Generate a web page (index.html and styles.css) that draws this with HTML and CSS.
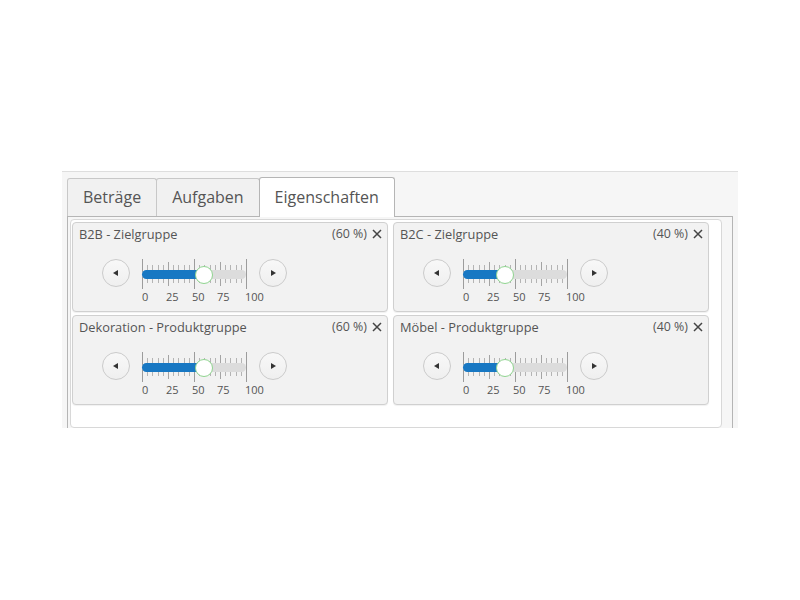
FILE: index.html
```html
<!DOCTYPE html>
<html lang="de">
<head>
  <meta charset="UTF-8" />
  <title>Eigenschaften</title>
  <link rel="stylesheet" href="styles.css">
</head>
<body>
  <div class="widget">
    <!-- Tabs -->
    <div class="tabs">
      <div class="tab">Beträge</div>
      <div class="tab">Aufgaben</div>
      <div class="tab active">Eigenschaften</div>
    </div>

    <div class="tab-content">
      <div class="box">
        <div class="panel">
          <div class="panel-head">
            <span class="title">B2B - Zielgruppe</span>
            <span class="pct">(60 %)</span>
            <svg class="close" width="10" height="10" viewBox="0 0 10 10"><path d="M1 1L9 9M9 1L1 9" /></svg>
          </div>
          <div class="slider-row">
            <div class="step prev"><span class="arrow"></span></div>
            <div class="slider">
              <div class="scale">
                <div class="track">
                  <div class="fill" style="width: 60%"></div>
                  <div class="handle" style="left: 60%"></div>
                </div>
              </div>
              <div class="labels"><span>0</span><span>25</span><span>50</span><span>75</span><span>100</span></div>
            </div>
            <div class="step next"><span class="arrow"></span></div>
          </div>
        </div>

        <div class="panel">
          <div class="panel-head">
            <span class="title">B2C - Zielgruppe</span>
            <span class="pct">(40 %)</span>
            <svg class="close" width="10" height="10" viewBox="0 0 10 10"><path d="M1 1L9 9M9 1L1 9" /></svg>
          </div>
          <div class="slider-row">
            <div class="step prev"><span class="arrow"></span></div>
            <div class="slider">
              <div class="scale">
                <div class="track">
                  <div class="fill" style="width: 40%"></div>
                  <div class="handle" style="left: 40%"></div>
                </div>
              </div>
              <div class="labels"><span>0</span><span>25</span><span>50</span><span>75</span><span>100</span></div>
            </div>
            <div class="step next"><span class="arrow"></span></div>
          </div>
        </div>

        <div class="panel">
          <div class="panel-head">
            <span class="title">Dekoration - Produktgruppe</span>
            <span class="pct">(60 %)</span>
            <svg class="close" width="10" height="10" viewBox="0 0 10 10"><path d="M1 1L9 9M9 1L1 9" /></svg>
          </div>
          <div class="slider-row">
            <div class="step prev"><span class="arrow"></span></div>
            <div class="slider">
              <div class="scale">
                <div class="track">
                  <div class="fill" style="width: 60%"></div>
                  <div class="handle" style="left: 60%"></div>
                </div>
              </div>
              <div class="labels"><span>0</span><span>25</span><span>50</span><span>75</span><span>100</span></div>
            </div>
            <div class="step next"><span class="arrow"></span></div>
          </div>
        </div>

        <div class="panel">
          <div class="panel-head">
            <span class="title">Möbel - Produktgruppe</span>
            <span class="pct">(40 %)</span>
            <svg class="close" width="10" height="10" viewBox="0 0 10 10"><path d="M1 1L9 9M9 1L1 9" /></svg>
          </div>
          <div class="slider-row">
            <div class="step prev"><span class="arrow"></span></div>
            <div class="slider">
              <div class="scale">
                <div class="track">
                  <div class="fill" style="width: 40%"></div>
                  <div class="handle" style="left: 40%"></div>
                </div>
              </div>
              <div class="labels"><span>0</span><span>25</span><span>50</span><span>75</span><span>100</span></div>
            </div>
            <div class="step next"><span class="arrow"></span></div>
          </div>
        </div>
      </div>
    </div>
  </div>
</body>
</html>
```

FILE: styles.css
```css
body {
  margin: 0;
  background: #fff;
  font-family: "Open Sans", "DejaVu Sans", sans-serif;
  color: #555;
}
.widget {
  margin: 171px 0 0 62px;
  width: 676px;
  height: 257px;
  box-sizing: border-box;
  overflow: hidden;
  background: #f6f6f6;
  border-top: 1px solid #dedede;
  padding: 6px 5px 0 5px;
}
.tabs {
  display: flex;
  height: 38px;
}
.tab {
  height: 38px;
  box-sizing: border-box;
  padding: 0 15px;
  margin-right: -1px;
  border: 1px solid #c8c8c8;
  border-bottom: none;
  border-radius: 3px 3px 0 0;
  background: #f1f1f1;
  font-size: 16px;
  line-height: 37px;
  color: #555;
}
.tab.active {
  position: relative;
  z-index: 1;
  margin-top: -1px;
  height: 40px;
  padding-top: 1px;
  background: #fff;
  border-color: #b5b5b5;
}
.tab-content {
  height: 260px;
  box-sizing: border-box;
  border: 1px solid #b5b5b5;
  padding: 2px 10px 0 2px;
}
.box {
  height: 209px;
  box-sizing: border-box;
  background: #fff;
  border: 1px solid #d8d8d8;
  border-radius: 4px;
  padding: 2px 0 0 1px;
  display: grid;
  grid-template-columns: 316px 316px;
  grid-auto-rows: 90px;
  column-gap: 5px;
  row-gap: 3px;
  align-content: start;
}
.panel {
  box-sizing: border-box;
  border: 1px solid #d0d0d0;
  border-radius: 4px;
  background: #f2f2f2;
  box-shadow: 0 1px 1px rgba(0, 0, 0, 0.06);
  padding: 3px 5px 0 6px;
}
.panel-head {
  display: flex;
  align-items: center;
  font-size: 12.8px;
  line-height: 16px;
}
.title {
  flex: 1;
}
.pct {
  font-size: 12.4px;
}
.close {
  margin-left: 5px;
  stroke: #444;
  stroke-width: 1.5;
}
.slider-row {
  display: flex;
  align-items: flex-start;
  margin: 17px 0 0 23px;
}
.step {
  width: 28px;
  height: 28px;
  box-sizing: border-box;
  border: 1px solid #cbcbcb;
  border-radius: 50%;
  background: linear-gradient(#f8f8f8, #efefef);
  display: flex;
  align-items: center;
  justify-content: center;
}
.arrow {
  width: 0;
  height: 0;
  border-top: 3px solid transparent;
  border-bottom: 3px solid transparent;
}
.prev .arrow {
  border-right: 5px solid #333;
  margin-left: -1px;
}
.next .arrow {
  border-left: 5px solid #333;
  margin-left: 1px;
}
.slider {
  margin: 0 12px;
  width: 105px;
}
.scale {
  position: relative;
  height: 30px;
  background-image:
    repeating-linear-gradient(90deg, #9c9c9c 0 1px, transparent 1px 52px),
    repeating-linear-gradient(90deg, #a4a4a4 0 1px, transparent 1px 26px),
    repeating-linear-gradient(90deg, #b4b4b4 0 1px, transparent 1px 5.2px);
  background-size: 100% 30px, 100% 24px, 100% 18px;
  background-position: left center;
  background-repeat: no-repeat;
}
.track {
  position: absolute;
  left: 0;
  top: 11px;
  width: 104px;
  height: 9px;
  border-radius: 5px;
  background: #dcdcdc;
}
.fill {
  height: 100%;
  border-radius: 5px 0 0 5px;
  background: #1878c3;
}
.handle {
  position: absolute;
  top: 50%;
  width: 18px;
  height: 18px;
  box-sizing: border-box;
  transform: translate(-50%, -50%);
  border: 1px solid #8fd48f;
  border-radius: 50%;
  background: #fff;
}
.labels {
  display: grid;
  grid-template-columns: 24px 26px 25px 28px auto;
  font-size: 11px;
  line-height: 15px;
  color: #555;
  white-space: nowrap;
}
```
